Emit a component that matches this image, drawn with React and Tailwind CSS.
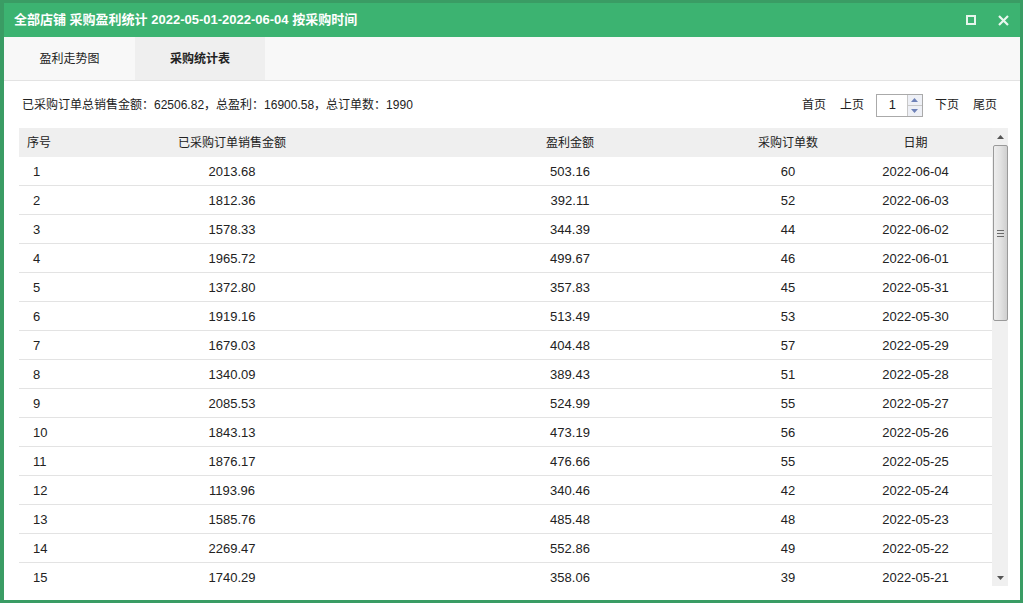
const rows = [
  ["1", "2013.68", "503.16", "60", "2022-06-04"],
  ["2", "1812.36", "392.11", "52", "2022-06-03"],
  ["3", "1578.33", "344.39", "44", "2022-06-02"],
  ["4", "1965.72", "499.67", "46", "2022-06-01"],
  ["5", "1372.80", "357.83", "45", "2022-05-31"],
  ["6", "1919.16", "513.49", "53", "2022-05-30"],
  ["7", "1679.03", "404.48", "57", "2022-05-29"],
  ["8", "1340.09", "389.43", "51", "2022-05-28"],
  ["9", "2085.53", "524.99", "55", "2022-05-27"],
  ["10", "1843.13", "473.19", "56", "2022-05-26"],
  ["11", "1876.17", "476.66", "55", "2022-05-25"],
  ["12", "1193.96", "340.46", "42", "2022-05-24"],
  ["13", "1585.76", "485.48", "48", "2022-05-23"],
  ["14", "2269.47", "552.86", "49", "2022-05-22"],
  ["15", "1740.29", "358.06", "39", "2022-05-21"],
];

function Spinner() {
  return (
    <div className="flex flex-col h-full w-[15px] border-l border-[#c8c8c8]">
      <div className="flex-1 flex items-center justify-center bg-[#eef0f6] border-b border-[#c8c8c8]">
        <svg width="7" height="4" viewBox="0 0 7 4">
          <path d="M0 4 L3.5 0 L7 4 Z" fill="#6f82b8" />
        </svg>
      </div>
      <div className="flex-1 flex items-center justify-center bg-[#eef0f6]">
        <svg width="7" height="4" viewBox="0 0 7 4">
          <path d="M0 0 L3.5 4 L7 0 Z" fill="#6f82b8" />
        </svg>
      </div>
    </div>
  );
}

function Scrollbar() {
  return (
    <div className="w-[16px] shrink-0 bg-[#f0f0f0] flex flex-col items-center">
      <div className="h-[17px] flex items-center justify-center">
        <svg width="7" height="4" viewBox="0 0 7 4">
          <path d="M0 4 L3.5 0 L7 4 Z" fill="#555" />
        </svg>
      </div>
      <div className="w-[15px] h-[176px] rounded-[2px] border border-[#9a9a9a] bg-gradient-to-r from-[#eeeeee] via-[#e2e2e2] to-[#cfcfcf] flex items-center justify-center">
        <div className="flex flex-col gap-[2px]">
          <div className="w-[7px] h-px bg-[#6a6a6a]" />
          <div className="w-[7px] h-px bg-[#6a6a6a]" />
          <div className="w-[7px] h-px bg-[#6a6a6a]" />
        </div>
      </div>
      <div className="flex-1" />
      <div className="h-[17px] flex items-center justify-center">
        <svg width="7" height="4" viewBox="0 0 7 4">
          <path d="M0 0 L3.5 4 L7 0 Z" fill="#555" />
        </svg>
      </div>
    </div>
  );
}

export default function App() {
  return (
    <div className="w-[1023px] h-[608px] bg-white font-['Liberation_Sans','Noto_Sans_CJK_SC',sans-serif] text-[#222]">
      <div className="h-[603px] flex flex-col border-[3px] border-l-4 border-[#3a9c64] bg-white overflow-hidden">
        {/* title bar */}
        <div className="h-[34px] shrink-0 bg-[#3cb371] flex items-center pl-[10px] text-white">
          <span className="text-[13px] font-bold">全部店铺 采购盈利统计 2022-05-01-2022-06-04 按采购时间</span>
          <div className="ml-auto flex h-full">
            <div className="w-[32px] flex items-center justify-center">
              <div className="w-[10px] h-[10px] border-[2.5px] border-[#e6f5ec]" />
            </div>
            <div className="w-[33px] flex items-center justify-center">
              <svg width="11" height="11" viewBox="0 0 11 11">
                <path d="M1 1 L10 10 M10 1 L1 10" stroke="#eaf7ef" strokeWidth="2.2" />
              </svg>
            </div>
          </div>
        </div>

        {/* tabs */}
        <div className="h-[44px] shrink-0 bg-[#f8f8f8] border-b border-[#e3e3e3] flex text-[12px]">
          <div className="w-[131px] flex items-center justify-center">盈利走势图</div>
          <div className="w-[130px] flex items-center justify-center bg-[#efefef] font-bold">采购统计表</div>
        </div>

        {/* summary + pagination */}
        <div className="h-[47px] shrink-0 flex items-center pl-[18px] pr-[23px] pt-px">
          <span className="text-[12px]">已采购订单总销售金额：62506.82，总盈利：16900.58，总订单数：1990</span>
          <div className="ml-auto flex items-center text-[12px]">
            <span>首页</span>
            <span className="ml-[14px]">上页</span>
            <div className="ml-[12px] w-[47px] h-[23px] border border-[#aaaaaa] flex items-stretch bg-white">
              <span className="flex-1 flex items-center justify-center text-[13px] pl-[1px]">1</span>
              <Spinner />
            </div>
            <span className="ml-[12px]">下页</span>
            <span className="ml-[14px]">尾页</span>
          </div>
        </div>

        {/* table */}
        <div className="h-[458px] shrink-0 flex pl-[15px] pr-[12px] overflow-hidden">
          <div className="flex-1 overflow-hidden">
            <div className="h-[29px] bg-[#efefef] flex items-center text-[12px]">
              <div className="w-[42px] pl-[8px]">序号</div>
              <div className="w-[342px] text-center">已采购订单销售金额</div>
              <div className="w-[334px] text-center">盈利金额</div>
              <div className="w-[102px] text-center">采购订单数</div>
              <div className="w-[153px] text-center">日期</div>
            </div>
            {rows.map((r) => (
              <div key={r[0]} className="h-[29px] flex items-center border-b border-[#e3e3e3] text-[13px] pt-px">
                <div className="w-[42px] pl-[14px]">{r[0]}</div>
                <div className="w-[342px] text-center">{r[1]}</div>
                <div className="w-[334px] text-center">{r[2]}</div>
                <div className="w-[102px] text-center">{r[3]}</div>
                <div className="w-[153px] text-center">{r[4]}</div>
              </div>
            ))}
          </div>
          <Scrollbar />
        </div>
      </div>
    </div>
  );
}
